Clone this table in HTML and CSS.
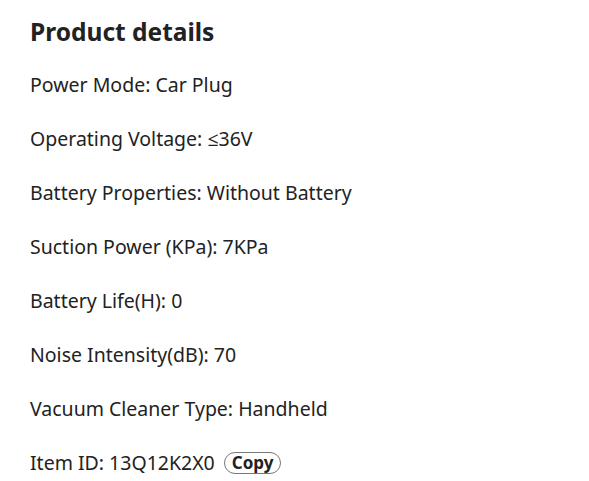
FILE: index.html
```html
<!DOCTYPE html>
<html>
<head>
<meta charset="utf-8">
<link rel="stylesheet" href="styles.css">
</head>
<body>
<section class="details">
  <h2 class="title">Product details</h2>
  <ul class="list">
    <li class="row">Power Mode: Car Plug</li>
    <li class="row">Operating Voltage: ≤36V</li>
    <li class="row">Battery Properties: Without Battery</li>
    <li class="row">Suction Power (KPa): 7KPa</li>
    <li class="row">Battery Life(H): 0</li>
    <li class="row">Noise Intensity(dB): 70</li>
    <li class="row">Vacuum Cleaner Type: Handheld</li>
    <li class="row">Item ID: 13Q12K2X0<button class="copy">Copy</button></li>
  </ul>
</section>
</body>
</html>
```
FILE: styles.css
```css
html, body { margin: 0; padding: 0; background: #fff; }
body {
  font-family: "Noto Sans", "Open Sans", sans-serif;
  color: #222;
}
.details { padding: 16px 30px 0 30px; }
.title {
  margin: 0;
  font-size: 24.5px;
  line-height: 32px;
  font-weight: 700;
  color: #222;
}
.list {
  list-style: none;
  margin: 25px 0 0 0;
  padding: 0;
  display: flex;
  flex-direction: column;
  gap: 30px;
}
.row {
  font-size: 19.5px;
  line-height: 24px;
  display: flex;
  align-items: center;
  white-space: pre;
}
.copy {
  margin-left: 9px;
  font-family: inherit;
  font-size: 17px;
  font-weight: 700;
  color: #222;
  background: #fff;
  border: 1px solid #777;
  border-radius: 12px;
  height: 22px;
  padding: 0 7px;
  line-height: 20px;
}
```
